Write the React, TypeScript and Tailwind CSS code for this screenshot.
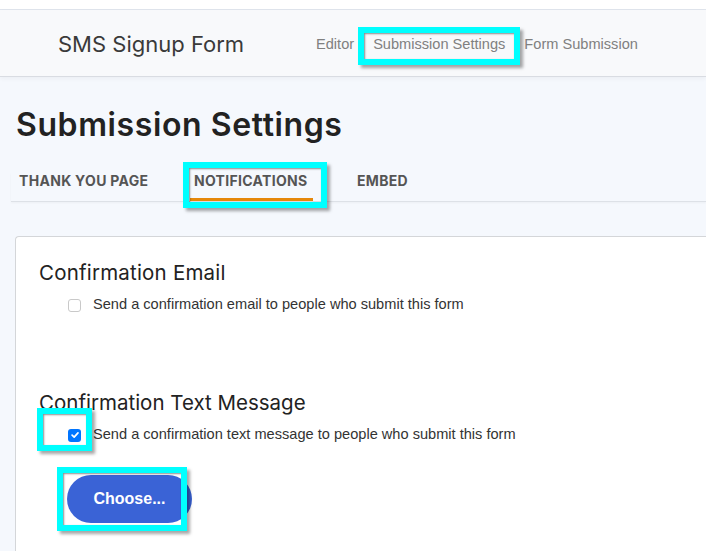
import React from 'react';

const NAV = ['Editor', 'Submission Settings', 'Form Submission'];

interface MarkProps {
  className: string;
}

// cyan highlight frame drawn on top of the screenshot
function Mark({ className }: MarkProps) {
  return (
    <div
      className={`pointer-events-none absolute border-[6px] border-[#00ffff] shadow-[3px_3px_3px_rgba(0,0,0,0.35),inset_1px_1px_2px_rgba(0,0,0,0.45)] ${className}`}
    />
  );
}

function CheckRow({ checked, label }: { checked: boolean; label: string }) {
  return (
    <label className="flex h-[18px] items-center pl-[29px] font-['Liberation_Sans',Arial,sans-serif] text-[14.6px] text-[#333]">
      {checked ? (
        <span className="flex size-[13px] items-center justify-center rounded-[3px] bg-[#0075ff]">
          <svg viewBox="0 0 12 12" className="size-[10px]" fill="none" stroke="white" strokeWidth="2" strokeLinecap="round" strokeLinejoin="round">
            <path d="M2.5 6.2 5 8.6 9.6 3.4" />
          </svg>
        </span>
      ) : (
        <span className="size-[13px] rounded-[3px] border border-[#c9c9c9] bg-white" />
      )}
      <span className="ml-[12px]">{label}</span>
    </label>
  );
}

export default function App() {
  return (
    <div className="relative h-[551px] w-[706px] overflow-hidden bg-[#f5f8fd]">
      <div className="h-[10px] border-b border-[#dfe4ec] bg-white" />
      <header className="flex h-[67px] items-center border-b border-[#d9dce2] bg-[#f8f9fb] shadow-[0_2px_4px_rgba(0,0,0,0.04)]">
        <div className="w-[316px] pt-[2px] pl-[58px] font-['Inter',sans-serif] text-[22px] text-[#3a3a3a]">
          SMS Signup Form
        </div>
        <nav className="flex gap-[19px] pt-[3px] font-['Liberation_Sans',Arial,sans-serif] text-[14.6px] text-[#808080]">
          {NAV.map((item) => (
            <span key={item}>{item}</span>
          ))}
        </nav>
      </header>

      <main className="pl-[16px]">
        <h1 className="mt-[29px] font-['Inter',sans-serif] text-[32px] leading-[37px] font-semibold tracking-[0.6px] text-[#222]">
          Submission Settings
        </h1>

        <div className="mt-[30px] ml-[-5px] flex border-b border-[#dde1e7] font-['Inter',sans-serif] text-[14px] leading-[16px] font-bold tracking-[0.3px] text-[#555] shadow-[0_1px_2px_rgba(0,0,0,0.04)]">
          <div className="w-[179px] border-b-[3px] border-transparent pb-[9px] pl-[8px]">THANK YOU PAGE</div>
          <div className="w-[123px] border-b-[3px] border-[#e5870a] pb-[9px] pl-[4px]">NOTIFICATIONS</div>
          <div className="border-b-[3px] border-transparent pb-[9px] pl-[44px]">EMBED</div>
        </div>

        <section className="mt-[34px] ml-[-1px] h-[400px] w-[720px] rounded-tl-[4px] border-t border-l border-[#d4d6d9] bg-white pt-[24px] pl-[23px]">
          <h2 className="font-['Inter',sans-serif] text-[20.5px] leading-[24px] tracking-[0.2px] text-[#222]">Confirmation Email</h2>
          <div className="mt-[11px]">
            <CheckRow checked={false} label="Send a confirmation email to people who submit this form" />
          </div>

          <h2 className="mt-[77px] font-['Inter',sans-serif] text-[20.5px] leading-[24px] text-[#222]">
            Confirmation Text Message
          </h2>
          <div className="mt-[11px]">
            <CheckRow checked label="Send a confirmation text message to people who submit this form" />
          </div>
          <button
            type="button"
            className="mt-[31px] ml-[28px] h-[48px] w-[125px] rounded-full bg-[#3a63d6] font-['Liberation_Sans',Arial,sans-serif] text-[16px] font-bold text-white"
          >
            Choose...
          </button>
        </section>
      </main>

      <Mark className="left-[358px] top-[27px] h-[38px] w-[162px]" />
      <Mark className="left-[183px] top-[162px] h-[46px] w-[144px]" />
      <Mark className="left-[37px] top-[408px] h-[43px] w-[55px]" />
      <Mark className="left-[57px] top-[467px] h-[64px] w-[130px]" />
    </div>
  );
}
